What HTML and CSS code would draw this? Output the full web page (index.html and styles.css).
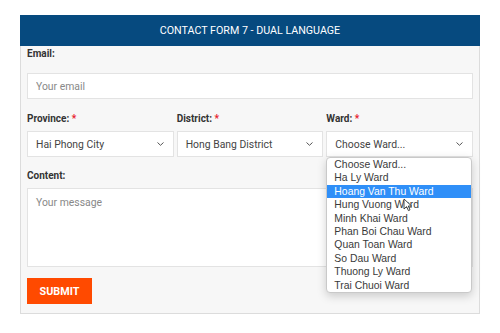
FILE: index.html
```html
<!DOCTYPE html>
<html lang="en">
<head>
    <meta charset="UTF-8">
    <meta name="viewport" content="width=device-width, initial-scale=1.0">
    <title>Contact Form 7 - Dual Language</title>
    <link rel="stylesheet" href="styles.css">
</head>
<body>
    <div class="card">
        <div class="card-header">CONTACT FORM 7 - DUAL LANGUAGE</div>
        <form class="card-body">
            <label class="label label-email">Email:</label>
            <input type="text" class="text-input" placeholder="Your email">

            <div class="row">
                <div class="col">
                    <label class="label">Province: <span class="req">*</span></label>
                    <div class="select">
                        <span>Hai Phong City</span>
                        <svg class="chevron" width="7" height="4" viewBox="0 0 7 4"><path d="M0.5 0.5 L3.5 3.3 L6.5 0.5" fill="none" stroke="#555" stroke-width="1"/></svg>
                    </div>
                </div>
                <div class="col">
                    <label class="label">District: <span class="req">*</span></label>
                    <div class="select">
                        <span>Hong Bang District</span>
                        <svg class="chevron" width="7" height="4" viewBox="0 0 7 4"><path d="M0.5 0.5 L3.5 3.3 L6.5 0.5" fill="none" stroke="#555" stroke-width="1"/></svg>
                    </div>
                </div>
                <div class="col">
                    <label class="label">Ward: <span class="req">*</span></label>
                    <div class="select select-open">
                        <span>Choose Ward...</span>
                        <svg class="chevron" width="7" height="4" viewBox="0 0 7 4"><path d="M0.5 0.5 L3.5 3.3 L6.5 0.5" fill="none" stroke="#555" stroke-width="1"/></svg>
                        <ul class="dropdown">
                            <li>Choose Ward...</li>
                            <li>Ha Ly Ward</li>
                            <li class="active">Hoang Van Thu Ward</li>
                            <li>Hung Vuong Ward</li>
                            <li>Minh Khai Ward</li>
                            <li>Phan Boi Chau Ward</li>
                            <li>Quan Toan Ward</li>
                            <li>So Dau Ward</li>
                            <li>Thuong Ly Ward</li>
                            <li>Trai Chuoi Ward</li>
                        </ul>
                        <svg class="cursor" width="10" height="14" viewBox="0 0 10 14"><path d="M1 1 L1 11 L3.6 8.6 L5.4 12.6 L7 11.9 L5.3 8 L8.6 8 Z" fill="#fff" stroke="#333" stroke-width="0.9" stroke-linejoin="round"/></svg>
                    </div>
                </div>
            </div>

            <label class="label label-content">Content:</label>
            <textarea class="text-area" placeholder="Your message"></textarea>

            <button type="button" class="submit-btn">SUBMIT</button>
        </form>
    </div>
</body>
</html>
```

FILE: styles.css
```css
body {
    margin: 0;
    background-color: #fff;
    font-family: Roboto, "Liberation Sans", Arial, sans-serif;
    color: #333;
}

.card {
    width: 458px;
    margin: 15px 0 0 20px;
    background-color: #f7f7f7;
    border: 1px solid #dcdcdc;
    border-top: none;
}

.card-header {
    height: 31px;
    line-height: 31px;
    margin: 0 -1px;
    background-color: #064a7f;
    color: #fff;
    text-align: center;
    font-size: 10.7px;
    font-weight: 400;
}

.card-body {
    padding: 1px 6px 9px;
}

.label {
    display: block;
    font-size: 10px;
    font-weight: 700;
    line-height: 14px;
    color: #333;
    margin-bottom: 5px;
}

.label-email {
    margin-bottom: 12px;
}

.req {
    color: #e8202a;
}

.text-input,
.text-area,
.select {
    box-sizing: border-box;
    display: block;
    width: 100%;
    background-color: #fff;
    border: 1px solid #e3e3e3;
    font-family: Roboto, "Liberation Sans", Arial, sans-serif;
    font-size: 10.4px;
    color: #444;
    margin: 0;
}

.text-input {
    height: 26px;
    padding: 0 8px;
    outline: none;
}

.text-input::placeholder,
.text-area::placeholder {
    color: #888;
}

.row {
    display: flex;
    gap: 3px;
    margin-top: 13px;
}

.col {
    flex: 1;
    min-width: 0;
}

.select {
    position: relative;
    height: 26px;
    padding: 0 9px 0 8px;
    display: flex;
    align-items: center;
    justify-content: space-between;
    color: #444;
}

.label-content {
    margin-top: 12px;
}

.text-area {
    height: 79px;
    padding: 7px 8px;
    resize: none;
    outline: none;
}

.submit-btn {
    display: block;
    margin-top: 11px;
    width: 65px;
    height: 26px;
    padding: 0;
    border: none;
    background-color: #ff4a00;
    color: #fff;
    font-family: Roboto, "Liberation Sans", Arial, sans-serif;
    font-size: 10.8px;
    font-weight: 700;
}

.dropdown {
    position: absolute;
    left: -1px;
    right: 0;
    top: 100%;
    margin: 1px 0 0;
    padding: 0;
    list-style: none;
    background-color: #fff;
    border: 1px solid #c9c9c9;
    border-radius: 4px;
    box-shadow: 0 3px 10px rgba(0, 0, 0, 0.18);
    font-family: "Liberation Sans", Arial, sans-serif;
    font-size: 10.4px;
    color: #3a3a3a;
    z-index: 5;
}

.dropdown li {
    height: 13.4px;
    line-height: 13.4px;
    padding-left: 7px;
    white-space: nowrap;
}

.dropdown li.active {
    background-color: #2f8ff8;
    color: #fff;
}

.cursor {
    position: absolute;
    left: 76px;
    top: 66px;
    z-index: 6;
}
```
